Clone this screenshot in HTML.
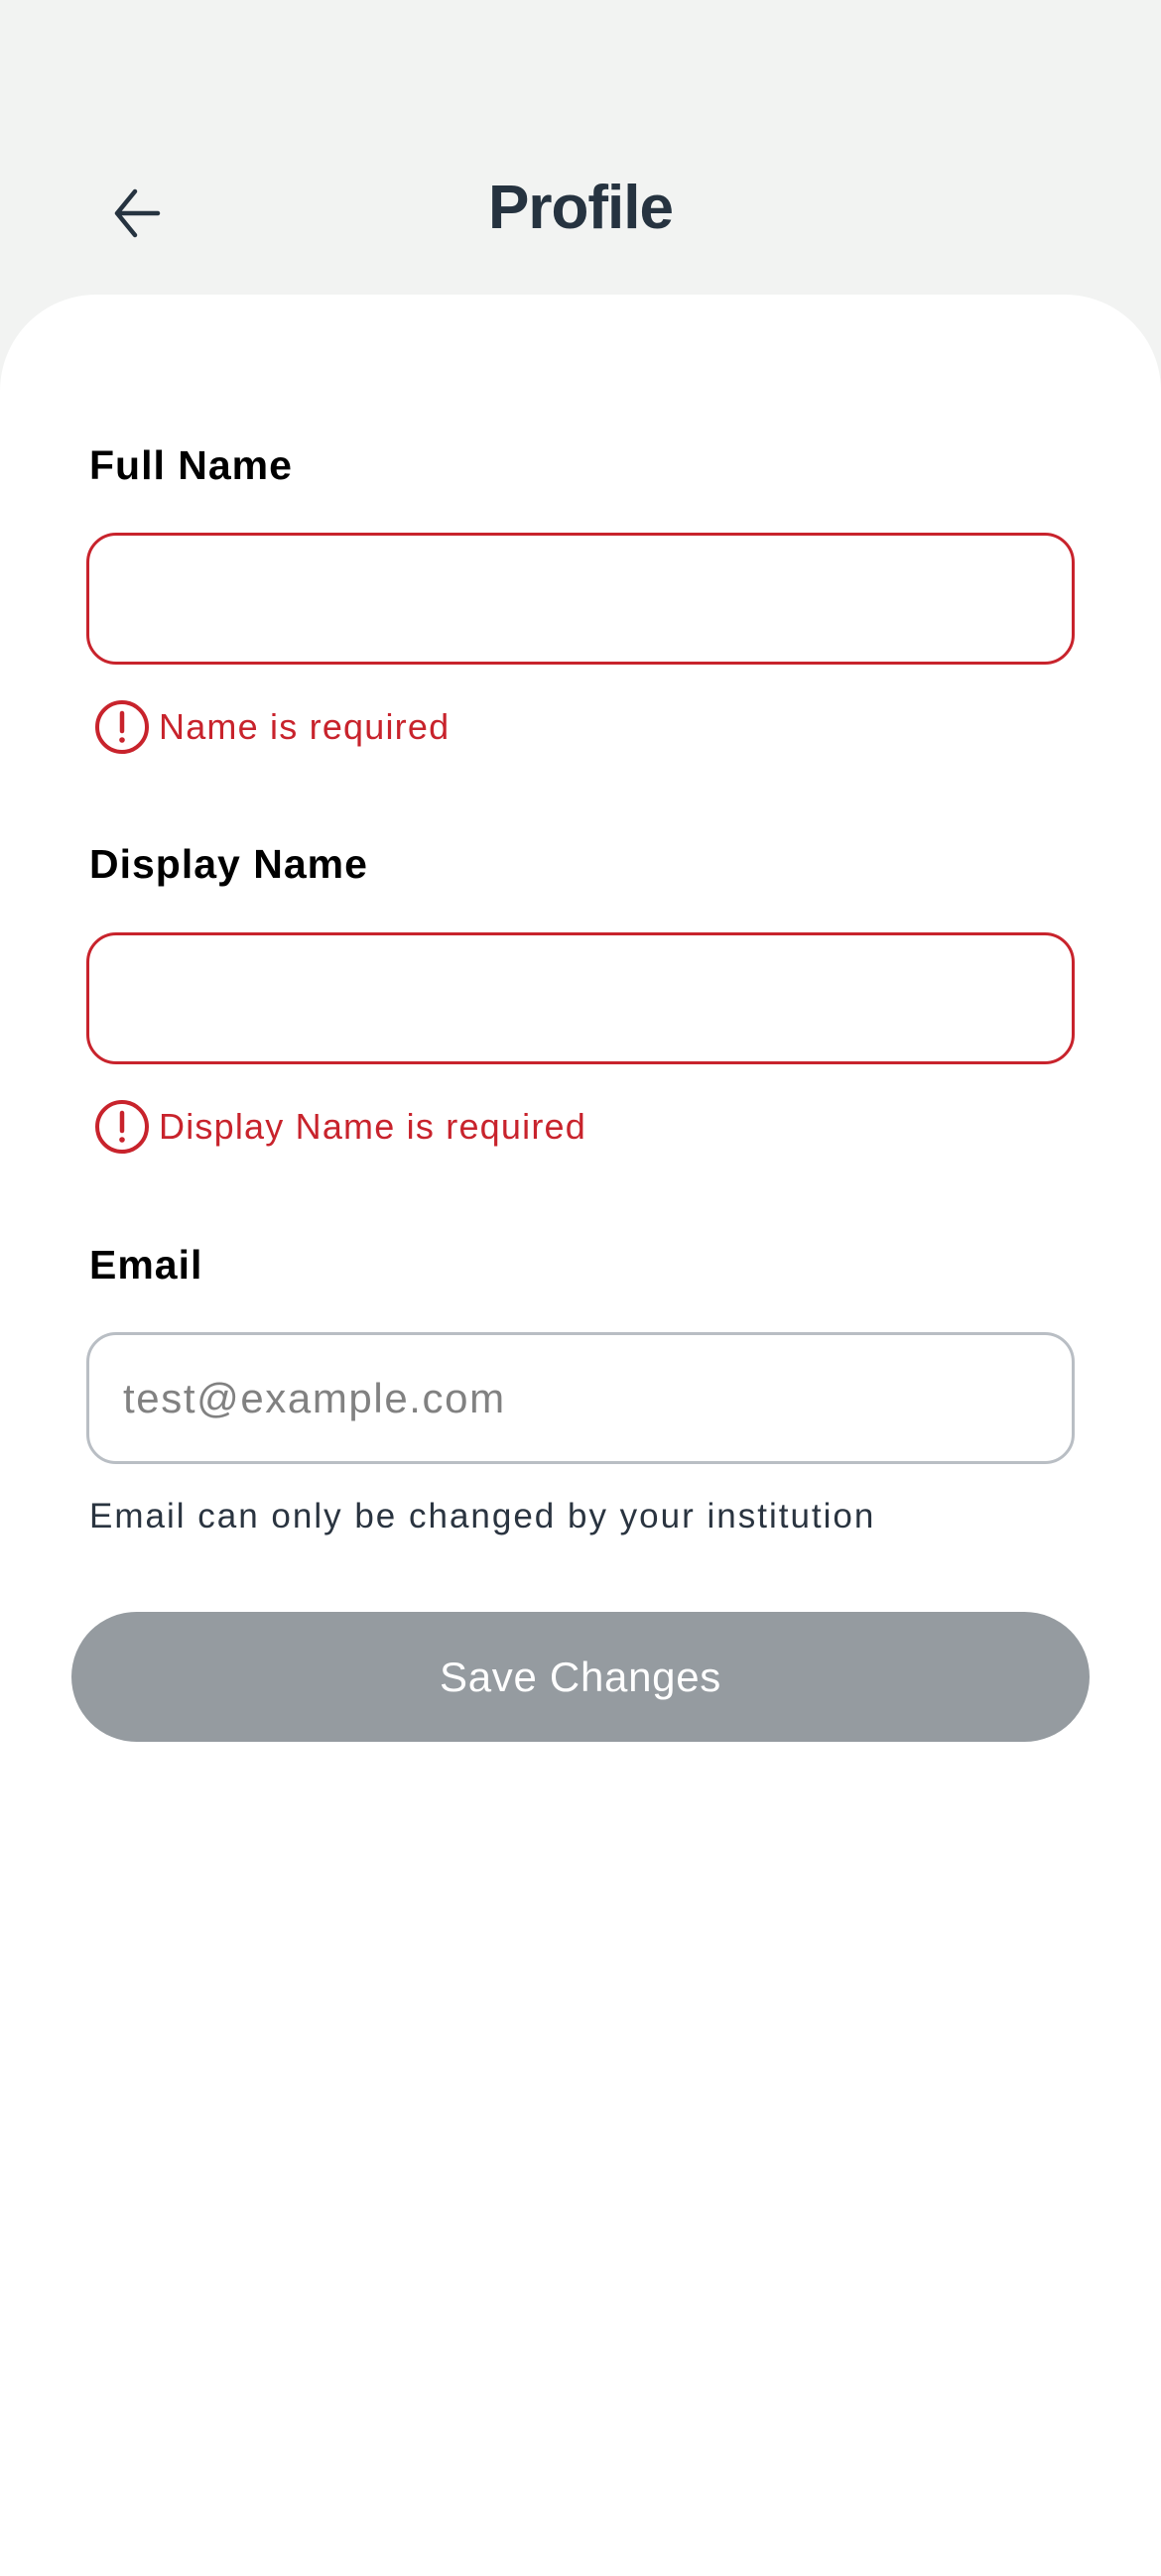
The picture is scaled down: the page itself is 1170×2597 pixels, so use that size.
<!DOCTYPE html>
<html><head><meta charset="utf-8"><style>
*{margin:0;padding:0;box-sizing:border-box}
body{width:1170px;height:2532px;background:#f2f3f2;font-family:"Liberation Sans",sans-serif;position:relative;overflow:hidden}
.card{position:absolute;left:0;top:297px;width:1170px;height:2300px;background:#fff;border-radius:97px 97px 0 0}
.t{position:absolute;white-space:nowrap}
.title{left:0;width:1170px;text-align:center;top:174px;font-size:62px;font-weight:bold;color:#263340;letter-spacing:-1px}
.lab{left:90px;font-size:41px;font-weight:bold;color:#000;letter-spacing:1px}
.inp{position:absolute;left:87px;width:996px;height:133px;border:3px solid #c8232c;border-radius:30px;background:#fff}
.err{left:160px;font-size:36px;color:#c8232c;letter-spacing:1.2px}
.ic{position:absolute;left:95px;width:56px;height:56px}
</style></head><body>
<svg style="position:absolute;left:110px;top:185px" width="56" height="60" viewBox="0 0 56 60"><path d="M49 30H8M26 8L8 30L26 52" fill="none" stroke="#263340" stroke-width="4.5" stroke-linecap="round" stroke-linejoin="round"/></svg>
<div class="t title">Profile</div>
<div class="card"></div>

<div class="t lab" style="top:446px">Full Name</div>
<div class="inp" style="top:537px"></div>
<svg class="ic" style="top:705px" viewBox="0 0 56 56"><circle cx="28" cy="28" r="25" fill="none" stroke="#c8232c" stroke-width="4"/><path d="M28 14V32" stroke="#c8232c" stroke-width="4.5" stroke-linecap="round"/><circle cx="28" cy="41" r="2.8" fill="#c8232c"/></svg>
<div class="t err" style="top:712px">Name is required</div>

<div class="t lab" style="top:848px">Display Name</div>
<div class="inp" style="top:940px"></div>
<svg class="ic" style="top:1108px" viewBox="0 0 56 56"><circle cx="28" cy="28" r="25" fill="none" stroke="#c8232c" stroke-width="4"/><path d="M28 14V32" stroke="#c8232c" stroke-width="4.5" stroke-linecap="round"/><circle cx="28" cy="41" r="2.8" fill="#c8232c"/></svg>
<div class="t err" style="top:1115px">Display Name is required</div>

<div class="t lab" style="top:1252px">Email</div>
<div class="inp" style="top:1343px;border-color:#b9bec4"></div>
<div class="t" style="left:124px;top:1386px;font-size:42px;color:#818181;letter-spacing:1.6px">test@example.com</div>
<div class="t" style="left:90px;top:1509px;font-size:35px;color:#2a3440;letter-spacing:2px">Email can only be changed by your institution</div>

<div style="position:absolute;left:72px;top:1625px;width:1026px;height:131px;border-radius:66px;background:#959ba0;color:#fff;font-size:42px;text-align:center;line-height:131px;letter-spacing:0.7px">Save Changes</div>
</body></html>
